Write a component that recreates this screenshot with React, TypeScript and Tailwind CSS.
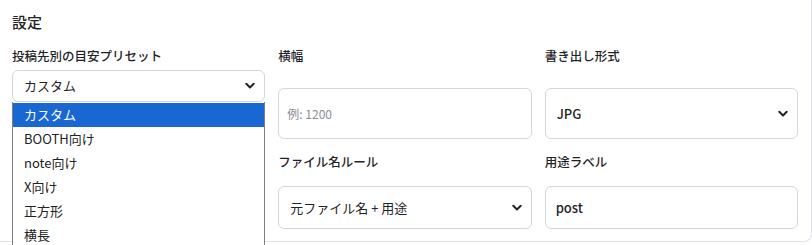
import { useState } from "react";

const presets = ["カスタム", "BOOTH向け", "note向け", "X向け", "正方形", "横長"];

function Chevron() {
  return (
    <svg
      width="10"
      height="7"
      viewBox="0 0 10 7"
      className="pointer-events-none absolute right-[10px] top-1/2 -translate-y-1/2"
    >
      <path d="M1.3 1.3 L5 5 L8.7 1.3" fill="none" stroke="#222" strokeWidth="2" strokeLinecap="round" strokeLinejoin="round" />
    </svg>
  );
}

export default function App() {
  const [preset, setPreset] = useState("カスタム");
  const [width, setWidth] = useState("");
  const [format, setFormat] = useState("JPG");
  const [rule, setRule] = useState("元ファイル名 + 用途");
  const [label, setLabel] = useState("post");

  return (
    <div
      className="relative w-[812px] h-[245px] overflow-hidden bg-white text-[#1f2328]"
      style={{ fontFamily: '"Noto Sans CJK JP", "Noto Sans", sans-serif' }}
    >
      <div className="h-[242px] border-b border-r border-[#dfe2e6] rounded-br-lg pl-3 pr-[13px] pt-3">
        <h2 className="text-[15px] leading-[20px] font-medium">設定</h2>

        <div className="grid grid-cols-3 gap-x-[13px] items-start mt-4">
          {/* col 1 */}
          <div className="flex flex-col">
            <label className="text-[12.5px] leading-4 font-medium">投稿先別の目安プリセット</label>
            <div className="relative mt-[6px]">
              <select
                value={preset}
                onChange={(e) => setPreset(e.target.value)}
                className="appearance-none w-full h-8 rounded-md border border-[#d3d6db] bg-white pl-[11px] text-[13px] outline-none"
              >
                {presets.map((p) => (
                  <option key={p}>{p}</option>
                ))}
              </select>
              <Chevron />
              <ul className="absolute left-0 top-full w-full border-x border-[#7d7d7d] bg-white text-[13px] z-10">
                {presets.map((p, i) => (
                  <li
                    key={p}
                    className={
                      i === 0
                        ? "h-6 leading-6 pl-[11px] bg-[#1967d2] text-white mt-[1px]"
                        : "h-6 leading-6 pl-[11px] text-[#222]"
                    }
                  >
                    {p}
                  </li>
                ))}
              </ul>
            </div>
          </div>

          {/* col 2 */}
          <div className="flex flex-col">
            <label className="text-[12.5px] leading-4 font-medium">横幅</label>
            <input
              value={width}
              onChange={(e) => setWidth(e.target.value)}
              placeholder="例: 1200"
              className="mt-6 h-[51px] rounded-md border border-[#d3d6db] px-[8px] text-[12px] placeholder:text-[#8a8d91] outline-none"
            />
          </div>

          {/* col 3 */}
          <div className="flex flex-col">
            <label className="text-[12.5px] leading-4 font-medium">書き出し形式</label>
            <div className="relative mt-6">
              <select
                value={format}
                onChange={(e) => setFormat(e.target.value)}
                className="appearance-none w-full h-[51px] rounded-md border border-[#d3d6db] bg-white pl-[11px] text-[13px] font-medium outline-none"
              >
                <option>JPG</option>
                <option>PNG</option>
                <option>WebP</option>
              </select>
              <Chevron />
            </div>
          </div>

          {/* row 2 */}
          <div />
          <div className="flex flex-col mt-[15px]">
            <label className="text-[12.5px] leading-4 font-medium">ファイル名ルール</label>
            <div className="relative mt-4">
              <select
                value={rule}
                onChange={(e) => setRule(e.target.value)}
                className="appearance-none w-full h-[43px] rounded-md border border-[#d3d6db] bg-white pl-[11px] text-[13px] outline-none"
              >
                <option>元ファイル名 + 用途</option>
                <option>用途 + 連番</option>
              </select>
              <Chevron />
            </div>
          </div>
          <div className="flex flex-col mt-[15px]">
            <label className="text-[12.5px] leading-4 font-medium">用途ラベル</label>
            <input
              value={label}
              onChange={(e) => setLabel(e.target.value)}
              className="mt-4 h-[43px] rounded-md border border-[#d3d6db] px-[10px] text-[13px] font-medium outline-none"
            />
          </div>
        </div>
      </div>
    </div>
  );
}
